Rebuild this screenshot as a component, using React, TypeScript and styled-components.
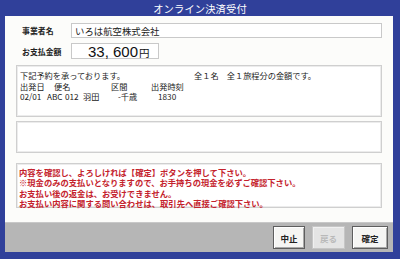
import React from "react";
import styled, { createGlobalStyle } from "styled-components";

const Global = createGlobalStyle`
  html, body { margin: 0; padding: 0; }
  body { width: 400px; height: 259px; overflow: hidden; }
`;

const JP = `"Noto Sans CJK JP", "Noto Sans", sans-serif`;

const Frame = styled.div`
  width: 400px;
  height: 259px;
  box-sizing: border-box;
  background: #30409a;
  padding: 0 7px 7px 5px;
  display: flex;
  flex-direction: column;
  font-family: ${JP};
`;

const Title = styled.div`
  height: 16px;
  line-height: 17px;
  text-align: center;
  color: #ffffff;
  font-size: 10.3px;
  letter-spacing: 0.1px;
  padding-left: 2px;
`;

const Panel = styled.div`
  flex: 1;
  background: #fcfcfa;
  display: flex;
  flex-direction: column;
`;

const Content = styled.div`
  flex: 1;
  padding: 7px 11px 0 11px;
  display: flex;
  flex-direction: column;
`;

const FieldRow = styled.div<{ $h: number; $mb: number }>`
  display: flex;
  align-items: center;
  height: ${(p) => p.$h}px;
  margin-bottom: ${(p) => p.$mb}px;
`;

const Label = styled.div`
  width: 55px;
  padding-left: 6px;
  box-sizing: border-box;
  font-size: 7.9px;
  font-weight: 700;
  color: #222;
  white-space: nowrap;
`;

const Input = styled.div<{ $w?: number }>`
  ${(p) => (p.$w ? `width: ${p.$w}px;` : "flex: 1;")}
  height: 100%;
  box-sizing: border-box;
  border: 1px solid #c9c9c9;
  background: #ffffff;
  display: flex;
  align-items: center;
`;

const Company = styled.span`
  font-size: 9.4px;
  color: #1a1a1a;
  padding-left: 3px;
`;

const Amount = styled.span`
  padding-left: 16px;
  font-family: "Liberation Sans", Arial, sans-serif;
  font-size: 15px;
  color: #111;
  display: flex;
  align-items: baseline;
`;

const Yen = styled.span`
  font-family: ${JP};
  font-size: 10.5px;
  margin-left: 1px;
`;

const Box = styled.div<{ $h: number; $mb: number }>`
  height: ${(p) => p.$h}px;
  margin-bottom: ${(p) => p.$mb}px;
  box-sizing: border-box;
  border: 1px solid #cfcfcf;
  box-shadow: inset 0 0 0 1px #ececec;
  background: #ffffff;
`;

const InfoBody = styled.div`
  padding: 4px 0 0 3px;
  font-size: 8.2px;
  line-height: 10.5px;
  color: #1a1a1a;
`;

const Line = styled.div`
  display: flex;
  white-space: nowrap;
`;

const Cell = styled.span<{ $w?: number }>`
  display: inline-block;
  ${(p) => (p.$w ? `width: ${p.$w}px;` : "")}
`;

const Notice = styled.div`
  padding: 3px 0 0 2px;
  font-size: 8.3px;
  line-height: 10.4px;
  font-weight: 700;
  color: #c4222c;
  white-space: nowrap;
`;

const NoticeLine = styled.div`
  height: 10.4px;
`;

const Footer = styled.div`
  height: 30px;
  background: #b6b6b6;
  border-top: 1px solid #c8c8c8;
  box-sizing: border-box;
  display: flex;
  justify-content: flex-end;
  align-items: center;
  gap: 7px;
  padding-right: 5px;
`;

const Button = styled.div<{ $w: number; $disabled?: boolean }>`
  width: ${(p) => p.$w}px;
  height: 23px;
  box-sizing: border-box;
  display: flex;
  align-items: center;
  justify-content: center;
  font-size: 8.5px;
  font-weight: 700;
  color: ${(p) => (p.$disabled ? "#b9b9b9" : "#222")};
  background: ${(p) => (p.$disabled ? "#e4e4e4" : "#f5f5f3")};
  border: 1px solid ${(p) => (p.$disabled ? "#c6c6c6" : "#5e5e5e")};
  box-shadow: ${(p) =>
    p.$disabled
      ? "inset 1px 1px 0 #f0f0f0"
      : "inset 1px 1px 0 #ffffff, inset -1px -1px 0 #a9a9a9"};
`;

export default function App() {
  return (
    <>
      <Global />
      <Frame>
        <Title>オンライン決済受付</Title>
        <Panel>
          <Content>
            <FieldRow $h={15} $mb={5}>
              <Label>事業者名</Label>
              <Input>
                <Company>いろは航空株式会社</Company>
              </Input>
            </FieldRow>
            <FieldRow $h={16} $mb={6}>
              <Label>お支払金額</Label>
              <Input $w={88}>
                <Amount>
                  33, 600<Yen>円</Yen>
                </Amount>
              </Input>
            </FieldRow>
            <Box $h={52} $mb={4}>
              <InfoBody>
                <Line>
                  <Cell $w={174}>下記予約を承っております。</Cell>
                  <Cell>全１名　全１旅程分の金額です。</Cell>
                </Line>
                <Line>
                  <Cell $w={34}>出発日</Cell>
                  <Cell $w={57}>便名</Cell>
                  <Cell $w={40}>区間</Cell>
                  <Cell>出発時刻</Cell>
                </Line>
                <Line>
                  <Cell $w={27}>02/01</Cell>
                  <Cell $w={18}>ABC</Cell>
                  <Cell $w={18}>012</Cell>
                  <Cell $w={35}>羽田</Cell>
                  <Cell $w={40}>-千歳</Cell>
                  <Cell>1830</Cell>
                </Line>
              </InfoBody>
            </Box>
            <Box $h={32} $mb={10} />
            <Box $h={45} $mb={0}>
              <Notice>
                <NoticeLine>内容を確認し、よろしければ【確定】ボタンを押して下さい。</NoticeLine>
                <NoticeLine>※現金のみの支払いとなりますので、お手持ちの現金を必ずご確認下さい。</NoticeLine>
                <NoticeLine>お支払い後の返金は、お受けできません。</NoticeLine>
                <NoticeLine>お支払い内容に関する問い合わせは、取引先へ直接ご確認下さい。</NoticeLine>
              </Notice>
            </Box>
          </Content>
          <Footer>
            <Button $w={32}>中止</Button>
            <Button $w={33} $disabled>
              戻る
            </Button>
            <Button $w={36}>確定</Button>
          </Footer>
        </Panel>
      </Frame>
    </>
  );
}
